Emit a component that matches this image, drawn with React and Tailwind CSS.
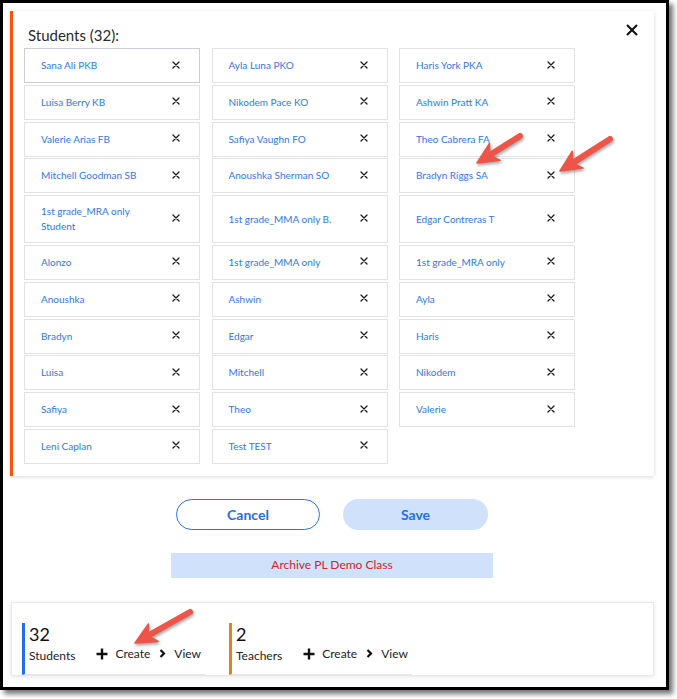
import React from "react";

const col1 = ["Sana Ali PKB","Luisa Berry KB","Valerie Arias FB","Mitchell Goodman SB","1st grade_MRA only Student","Alonzo","Anoushka","Bradyn","Luisa","Safiya","Leni Caplan"];
const col2 = ["Ayla Luna PKO","Nikodem Pace KO","Safiya Vaughn FO","Anoushka Sherman SO","1st grade_MMA only B.","1st grade_MMA only","Ashwin","Edgar","Mitchell","Theo","Test TEST"];
const col3 = ["Haris York PKA","Ashwin Pratt KA","Theo Cabrera FA","Bradyn Riggs SA","Edgar Contreras T","1st grade_MRA only","Ayla","Haris","Nikodem","Valerie"];

const cells = [];
for (let r = 0; r < 11; r++) {
  [col1, col2, col3].forEach((c, ci) => {
    cells.push({ name: c[r], key: r + "-" + ci, first: r === 0 && ci === 0 });
  });
}

function XSmall() {
  return (
    <svg width="8" height="8" viewBox="0 0 8 8" className="shrink-0 -mt-[2px]">
      <path d="M1 1L7 7M7 1L1 7" stroke="#1a1a1a" strokeWidth="1.3" strokeLinecap="round" />
    </svg>
  );
}

function Item({ name, first }) {
  return (
    <div
      className={`flex items-center justify-between min-h-[35px] py-2 pl-4 pr-[19px] border bg-white ${
        first ? "border-[#c9ced8]" : "border-[#e2e2e2]"
      }`}
    >
      <span className="w-[120px] text-[10px] leading-[15px] text-[#2f78e6]">{name}</span>
      <XSmall />
    </div>
  );
}

function Arrow({ x1, y1, x2, y2 }) {
  const dx = x2 - x1;
  const dy = y2 - y1;
  const len = Math.sqrt(dx * dx + dy * dy);
  const ux = dx / len;
  const uy = dy / len;
  const nx = -uy;
  const ny = ux;
  const hl = 19;
  const hw = 10;
  const bx = x2 - ux * hl;
  const by = y2 - uy * hl;
  const pts = [
    [x2, y2],
    [bx + nx * hw - ux * 2, by + ny * hw - uy * 2],
    [bx + ux * 4, by + uy * 4],
    [bx - nx * hw - ux * 2, by - ny * hw - uy * 2],
  ]
    .map((p) => p.join(","))
    .join(" ");
  return (
    <g>
      <line x1={x1} y1={y1} x2={bx + ux * 3} y2={by + uy * 3} stroke="#ee5447" strokeWidth="6" strokeLinecap="round" />
      <polygon points={pts} fill="#ee5447" stroke="#ee5447" strokeWidth="1.5" strokeLinejoin="round" />
    </g>
  );
}

function Plus() {
  return (
    <svg width="12" height="12" viewBox="0 0 12 12" className="shrink-0">
      <path d="M6 0.5V11.5M0.5 6H11.5" stroke="#111" strokeWidth="2.4" />
    </svg>
  );
}

function Chevron() {
  return (
    <svg width="7" height="9" viewBox="0 0 7 9" className="shrink-0">
      <path d="M1.5 1L5 4.5L1.5 8" stroke="#111" strokeWidth="2.2" fill="none" />
    </svg>
  );
}

function Stat({ num, label, bar }) {
  return (
    <div className={`w-[183px] flex flex-col border-l-[3px] ${bar} border-b border-b-[#e4e4e4] pl-[4px]`}>
      <div className="text-[18px] leading-[22px] text-[#111]">{num}</div>
      <div className="flex items-center h-[18px]">
        <span className="text-[12px] leading-[18px] text-[#222] translate-y-[2px]">{label}</span>
        <div className="flex items-center ml-[21px]">
          <Plus />
          <span className="ml-[7px] text-[12px] leading-[18px] text-[#222]">Create</span>
          <span className="ml-[9px]"><Chevron /></span>
          <span className="ml-[8px] text-[12px] leading-[18px] text-[#222]">View</span>
        </div>
      </div>
    </div>
  );
}

export default function App() {
  return (
    <div
      className="relative w-[677px] h-[699px] bg-white"
      style={{ fontFamily: "Lato, 'Liberation Sans', sans-serif" }}
    >
      <div className="w-[669px] h-[690px] border-[3px] border-black bg-white shadow-[4px_4px_5px_rgba(0,0,0,0.55)] flex flex-col">
        <div className="ml-[7px] mt-[8px] w-[644px] bg-white border-l-[3px] border-l-[#fa560a] shadow-[0_1px_4px_rgba(0,0,0,0.16)] pt-[14px] pb-[12px] pl-[11px] pr-[16px]">
          <div className="flex justify-between items-start h-[20px]">
            <div className="pl-[4px] text-[15px] leading-[20px] text-[#2a2a2a]">Students (32):</div>
            <svg width="12" height="12" viewBox="0 0 12 12" className="-mt-[1px]">
              <path d="M1 1L11 11M11 1L1 11" stroke="#111" strokeWidth="2.1" />
            </svg>
          </div>
          <div className="mt-[3px] grid grid-cols-[176px_176px_176px] gap-x-[11.5px] gap-y-[1.8px]">
            {cells.map((c) =>
              c.name ? <Item key={c.key} name={c.name} first={c.first} /> : <div key={c.key} />
            )}
          </div>
        </div>

        <div className="ml-[7px] w-[644px] mt-[23px] flex justify-center gap-[23px]">
          <button className="w-[144px] h-[31px] rounded-full border border-[#2a72e6] bg-white text-[14px] font-bold text-[#1f6fe5]">
            Cancel
          </button>
          <button className="w-[145px] h-[31px] rounded-full bg-[#cfe1fb] text-[14px] font-bold text-[#1f6fe5]">
            Save
          </button>
        </div>

        <div className="ml-[7px] w-[644px] mt-[23px] flex justify-center">
          <div className="w-[322px] h-[25px] bg-[#d0e1fb] flex items-center justify-center text-[12px] text-[#d2232a]">
            Archive PL Demo Class
          </div>
        </div>

        <div className="ml-[8px] mt-[24px] w-[643px] h-[74px] bg-white border border-[#e8e8e8] shadow-[0_1px_4px_rgba(0,0,0,0.1)] pt-[20px] pl-[10px] flex gap-[24px]">
          <Stat num="32" label="Students" bar="border-l-[#1f6ff0]" />
          <Stat num="2" label="Teachers" bar="border-l-[#e5801c]" />
        </div>
      </div>

      <svg className="absolute inset-0 pointer-events-none drop-shadow-[1px_2px_1.5px_rgba(0,0,0,0.35)]" width="677" height="699">
        <Arrow x1={520} y1={136} x2={477} y2={163} />
        <Arrow x1={610} y1={139} x2={560} y2={171} />
        <Arrow x1={190} y1={612} x2={135} y2={643} />
      </svg>
    </div>
  );
}
